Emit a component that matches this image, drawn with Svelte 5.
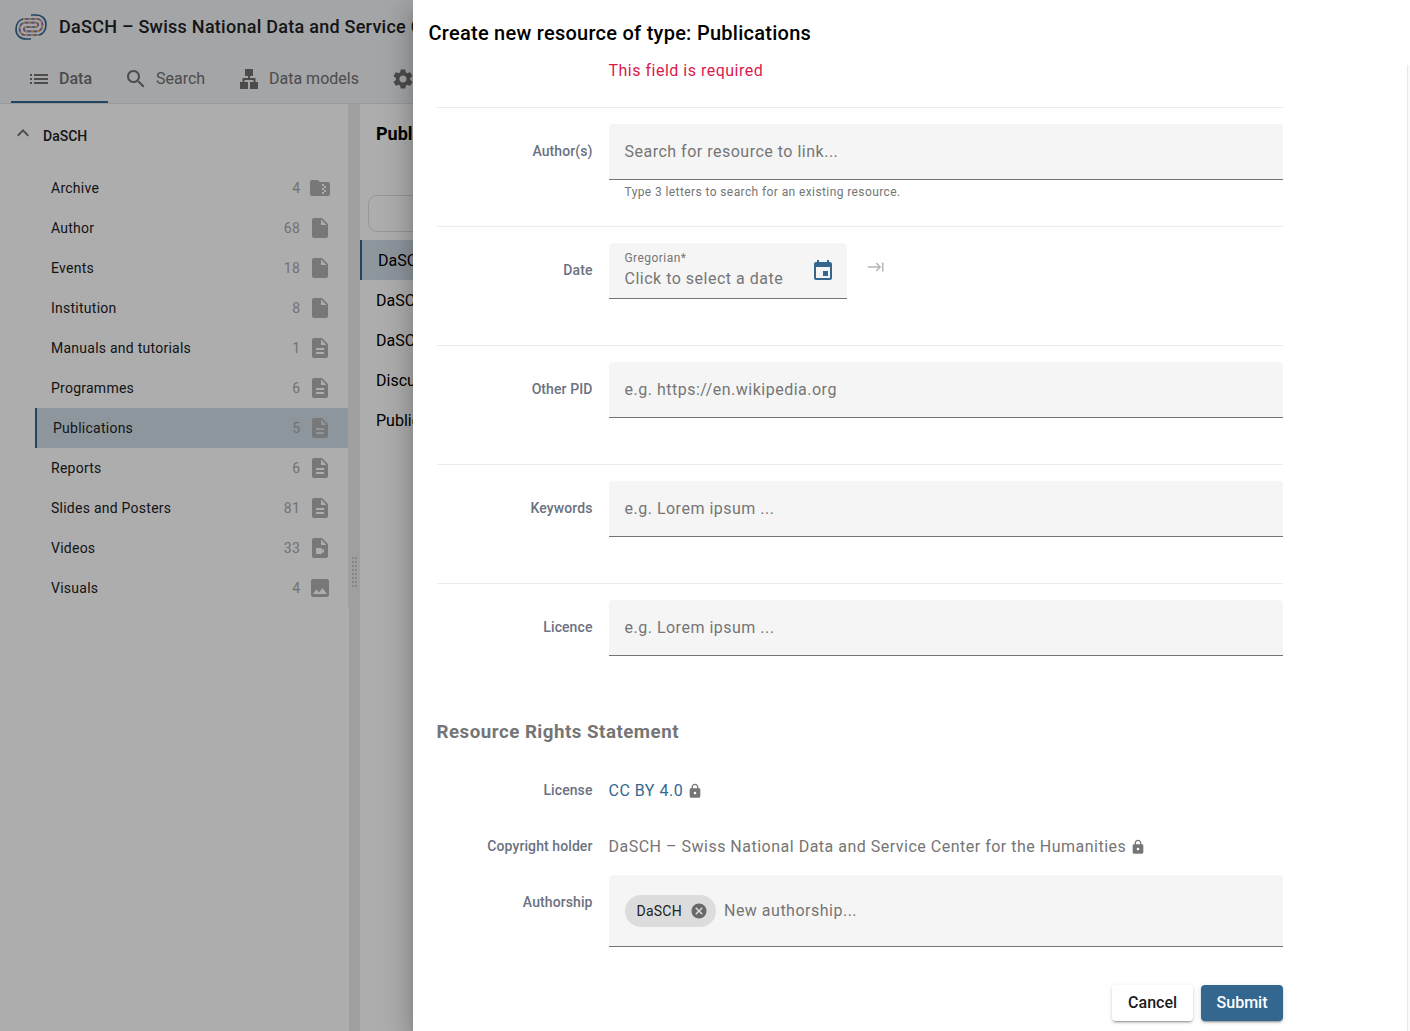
<script>
  const classes = [
    { name: 'Archive', count: 4, icon: 'zip' },
    { name: 'Author', count: 68, icon: 'file' },
    { name: 'Events', count: 18, icon: 'file' },
    { name: 'Institution', count: 8, icon: 'file' },
    { name: 'Manuals and tutorials', count: 1, icon: 'doc' },
    { name: 'Programmes', count: 6, icon: 'doc' },
    { name: 'Publications', count: 5, icon: 'doc', active: true },
    { name: 'Reports', count: 6, icon: 'doc' },
    { name: 'Slides and Posters', count: 81, icon: 'doc' },
    { name: 'Videos', count: 33, icon: 'video' },
    { name: 'Visuals', count: 4, icon: 'image' },
  ];

  const resources = ['DaSCH', 'DaSCH', 'DaSCH', 'Discuss', 'Public'];

  const paths = {
    zip: 'M20 6h-8l-2-2H4c-1.1 0-2 .9-2 2v12c0 1.1.9 2 2 2h16c1.1 0 2-.9 2-2V8c0-1.1-.9-2-2-2zm-2 6h-2v2h2v2h-2v2h-2v-2h2v-2h-2v-2h2v-2h-2V8h2v2h2v2z',
    file: 'M6 2c-1.1 0-2 .9-2 2v16c0 1.1.9 2 2 2h12c1.1 0 2-.9 2-2V8l-6-6H6zm7 7V3.5L18.5 9H13z',
    doc: 'M14 2H6c-1.1 0-2 .9-2 2v16c0 1.1.9 2 2 2h12c1.1 0 2-.9 2-2V8l-6-6zm2 16H8v-2h8v2zm0-4H8v-2h8v2zm-3-5V3.5L18.5 9H13z',
    video: 'M14 2H6c-1.1 0-2 .9-2 2v16c0 1.1.9 2 2 2h12c1.1 0 2-.9 2-2V8l-6-6zm-1 7V3.5L18.5 9H13zm1 5 2-1.06v4.12L14 16v1c0 .55-.45 1-1 1H9c-.55 0-1-.45-1-1v-4c0-.55.45-1 1-1h4c.55 0 1 .45 1 1v1z',
    image: 'M21 19V5c0-1.1-.9-2-2-2H5c-1.1 0-2 .9-2 2v14c0 1.1.9 2 2 2h14c1.1 0 2-.9 2-2zM8.5 13.5l2.5 3.01L14.5 12l4.5 6H5l3.5-4.5z',
    list: 'M3 9h2V7H3v2zm0 4h2v-2H3v2zm0 4h2v-2H3v2zM7 7v2h14V7H7zm0 6h14v-2H7v2zm0 4h14v-2H7v2z',
    search: 'M15.5 14h-.79l-.28-.27C15.41 12.59 16 11.11 16 9.5 16 5.91 13.09 3 9.5 3S3 5.91 3 9.5 5.91 16 9.5 16c1.61 0 3.09-.59 4.23-1.57l.27.28v.79l5 4.99L20.49 19l-4.99-5zm-6 0C7.01 14 5 11.99 5 9.5S7.01 5 9.5 5 14 7.01 14 9.5 11.99 14 9.5 14z',
    tree: 'M8 2h8v7h-3v2h5.5v4H21v7h-8v-7h3.5v-2h-9v2H11v7H3v-7h2.5v-4H11V9H8z',
    gear: 'M19.14 12.94c.04-.3.06-.61.06-.94 0-.32-.02-.64-.07-.94l2.03-1.58c.18-.14.23-.41.12-.61l-1.92-3.32c-.12-.22-.37-.29-.59-.22l-2.39.96c-.5-.38-1.03-.7-1.62-.94l-.36-2.54c-.04-.24-.24-.41-.48-.41h-3.84c-.24 0-.43.17-.47.41l-.36 2.54c-.59.24-1.13.57-1.62.94l-2.39-.96c-.22-.08-.47 0-.59.22L2.74 8.87c-.12.21-.08.47.12.61l2.03 1.58c-.05.3-.09.63-.09.94s.02.64.07.94l-2.03 1.58c-.18.14-.23.41-.12.61l1.92 3.32c.12.22.37.29.59.22l2.39-.96c.5.38 1.03.7 1.62.94l.36 2.54c.05.24.24.41.48.41h3.84c.24 0 .44-.17.47-.41l.36-2.54c.59-.24 1.13-.56 1.62-.94l2.39.96c.22.08.47 0 .59-.22l1.92-3.32c.12-.22.07-.47-.12-.61l-2.01-1.58zM12 15.6c-1.98 0-3.6-1.62-3.6-3.6s1.62-3.6 3.6-3.6 3.6 1.62 3.6 3.6-1.62 3.6-3.6 3.6z',
    up: 'M12 8l-6 6 1.41 1.41L12 10.83l4.59 4.58L18 14z',
    calendar: 'M17 12h-5v5h5v-5zM16 1v2H8V1H6v2H5c-1.11 0-1.99.9-1.99 2L3 19c0 1.1.89 2 2 2h14c1.1 0 2-.9 2-2V5c0-1.1-.9-2-2-2h-1V1h-2zm3 18H5V8h14v11z',
    tab: 'M11.59 7.41 15.17 11H1v2h14.17l-3.59 3.59L13 18l6-6-6-6-1.41 1.41zM20 6v12h2V6h-2z',
    lock: 'M18 8h-1V6c0-2.76-2.24-5-5-5S7 3.24 7 6v2H6c-1.1 0-2 .9-2 2v10c0 1.1.9 2 2 2h12c1.1 0 2-.9 2-2V10c0-1.1-.9-2-2-2zm-6 9c-1.1 0-2-.9-2-2s.9-2 2-2 2 .9 2 2-.9 2-2 2zm3.1-9H8.9V6c0-1.71 1.39-3.1 3.1-3.1s3.1 1.39 3.1 3.1v2z',
    cancel: 'M12 2C6.47 2 2 6.47 2 12s4.47 10 10 10 10-4.47 10-10S17.53 2 12 2zm5 13.59L15.59 17 12 13.41 8.41 17 7 15.59 10.59 12 7 8.41 8.41 7 12 10.59 15.59 7 17 8.41 13.41 12 17 15.59z',
  };

  // One coil of the logo; the second is the same coil turned by 180 degrees.
  const coilOuter = 'M16 1H21C27 1 31 5 31 10.5C31 16 28 20 24 21';
  const coilInner = 'M24 21H10C6.5 21 4.5 18.5 4.5 15C4.5 11.5 7 8.7 10 8.7H20.5C24 8.7 24 13 20.5 13H13';
</script>

{#snippet icon(name, cls)}
  <svg class="icon {cls}" viewBox="0 0 24 24" aria-hidden="true"><path d={paths[name]} /></svg>
{/snippet}

{#snippet coil()}
  <path class="blue" d={coilOuter} />
  <path class="steel" d={coilInner} />
  <path class="dash orange" d={coilInner} />
  <path class="dash pink" d={coilInner} />
{/snippet}

<div class="page">
  <header>
    <div class="brand">
      <svg class="logo" viewBox="0 0 32 26" fill="none">
        <g>{@render coil()}</g>
        <g transform="rotate(180 16 13)">{@render coil()}</g>
      </svg>
      <span class="brand-name">DaSCH – Swiss National Data and Service Center</span>
    </div>
    <nav>
      <span class="tab current">{@render icon('list', '')}Data</span>
      <span class="tab search">{@render icon('search', '')}Search</span>
      <span class="tab">{@render icon('tree', '')}Data models</span>
      <span class="tab">{@render icon('gear', '')}</span>
    </nav>
  </header>

  <div class="body">
    <aside>
      <div class="ontology">{@render icon('up', 'chevron')}<span>DaSCH</span></div>
      <ul class="classes">
        {#each classes as c}
          <li class:active={c.active}>
            <span class="name">{c.name}</span>
            <span class="count">{c.count}</span>
            {@render icon(c.icon, '')}
          </li>
        {/each}
      </ul>
    </aside>
    <div class="splitter"><div class="grip"></div></div>
    <main>
      <h2>Publications</h2>
      <div class="filter"></div>
      <ul class="resources">
        {#each resources as r, i}
          <li class:active={i === 0}>{r}</li>
        {/each}
      </ul>
    </main>
  </div>
</div>

<div class="backdrop"></div>

<section class="drawer">
  <h1>Create new resource of type: Publications</h1>
  <div class="scroller">
    <form>
      <p class="error">This field is required</p>

      <div class="row">
        <span class="label">Author(s)</span>
        <div class="control">
          <div class="field">Search for resource to link...</div>
          <span class="hint">Type 3 letters to search for an existing resource.</span>
        </div>
      </div>
      <div class="row">
        <span class="label">Date</span>
        <div class="control dates">
          <div class="field date">
            <div class="date-text"><small>Gregorian*</small><span>Click to select a date</span></div>
            {@render icon('calendar', 'calendar')}
          </div>
          {@render icon('tab', 'range')}
        </div>
      </div>
      <div class="row">
        <span class="label">Other PID</span>
        <div class="control"><div class="field">e.g. https://en.wikipedia.org</div></div>
      </div>
      <div class="row">
        <span class="label">Keywords</span>
        <div class="control"><div class="field">e.g. Lorem ipsum ...</div></div>
      </div>
      <div class="row">
        <span class="label">Licence</span>
        <div class="control"><div class="field">e.g. Lorem ipsum ...</div></div>
      </div>

      <h3>Resource Rights Statement</h3>
      <div class="right-row">
        <span class="label">License</span>
        <span class="value link">CC BY 4.0{@render icon('lock', 'lock')}</span>
      </div>
      <div class="right-row">
        <span class="label">Copyright holder</span>
        <span class="value">DaSCH – Swiss National Data and Service Center for the Humanities{@render icon('lock', 'lock')}</span>
      </div>
      <div class="right-row authorship">
        <span class="label">Authorship</span>
        <div class="field chips">
          <span class="chip">DaSCH{@render icon('cancel', 'cancel')}</span>
          <span>New authorship...</span>
        </div>
      </div>

      <div class="actions">
        <button type="button">Cancel</button>
        <button type="button" class="primary">Submit</button>
      </div>
    </form>
  </div>
</section>

<style>
  :global(body) {
    margin: 0;
    overflow: hidden;
    font-family: Roboto, 'Liberation Sans', sans-serif;
    background: #fff;
  }
  * { box-sizing: border-box; }
  ul { list-style: none; margin: 0; padding: 0; }
  h1, h2, h3, p { margin: 0; }
  .icon { width: 24px; height: 24px; fill: currentColor; flex: none; }

  .page {
    height: 1031px;
    display: flex;
    flex-direction: column;
    overflow: hidden;
  }
  header {
    height: 104px;
    background: #f1f3f6;
    border-bottom: 1px solid #e4e4e4;
    flex: none;
  }
  .brand {
    height: 54px;
    padding-left: 15px;
    display: flex;
    align-items: center;
    gap: 12px;
    white-space: nowrap;
  }
  .logo { width: 32px; height: 26px; flex: none; stroke-width: 1.7; }
  .blue { stroke: #336790; }
  .steel { stroke: #5d8db5; }
  .dash { stroke-dasharray: 2 4; }
  .orange { stroke: #f2b450; }
  .pink { stroke: #c0609a; stroke-dashoffset: 3px; }
  .brand-name {
    padding-bottom: 2px;
    font-size: 18px;
    font-weight: 500;
    letter-spacing: 0.26px;
    color: #202124;
  }
  nav { height: 49px; padding-left: 11px; display: flex; color: #707070; }
  .tab {
    display: flex;
    align-items: center;
    gap: 8px;
    height: 49px;
    padding: 0 16px;
    font-size: 16px;
    white-space: nowrap;
  }
  .current {
    width: 97px;
    font-weight: 500;
    box-shadow: inset 0 -2px #336790;
  }
  .search { width: 113px; }

  .body { flex: 1; display: flex; min-height: 0; }
  aside { width: 348px; flex: none; }
  .ontology {
    height: 64px;
    padding-left: 11px;
    display: flex;
    align-items: center;
    gap: 8px;
    font-size: 14px;
    font-weight: 500;
    color: #202124;
  }
  .chevron { color: #707070; margin-bottom: 6px; }
  .classes { padding-left: 35px; }
  .classes li {
    height: 40px;
    padding: 0 16px;
    display: flex;
    align-items: center;
    font-size: 14px;
    letter-spacing: 0.25px;
    color: #202124;
  }
  .classes .name { flex: 1; }
  .classes .count { margin-right: 7.5px; color: #a8a8a8; letter-spacing: 0.5px; }
  .classes .icon { color: #b2b2b2; }
  li.active { background: #d2dee8; border-left: 2px solid #336790; }
  .splitter {
    width: 12px;
    flex: none;
    background: linear-gradient(#fff, #fff) 0 504px / 1px 100% no-repeat #eaeaea;
    display: flex;
    justify-content: flex-end;
    align-items: center;
    padding: 9px 2px 0 0;
  }
  .grip {
    width: 6px;
    height: 31px;
    background:
      linear-gradient(transparent 2px, #eaeaea 2px) 0 0 / 100% 4px,
      repeating-linear-gradient(90deg, #c4c4c4 0 2px, transparent 2px 3px);
  }
  main { flex: 1; }
  main h2 { font-size: 18px; font-weight: 700; padding: 19px 16px 0; line-height: 21px; }
  .filter {
    height: 37px;
    margin: 51px 8px 8px;
    border: 1px solid #dedede;
    border-radius: 9px;
  }
  .resources li { height: 40px; padding-left: 16px; line-height: 42px; font-size: 16px; }

  .backdrop { position: absolute; inset: 0; background: rgba(0, 0, 0, 0.32); }

  .drawer {
    position: absolute;
    top: 0;
    right: 0;
    width: 997px;
    height: 1031px;
    background: #fff;
    display: flex;
    flex-direction: column;
    box-shadow:
      0 8px 10px -5px rgba(0, 0, 0, 0.2),
      0 16px 24px 2px rgba(0, 0, 0, 0.14),
      0 6px 30px 5px rgba(0, 0, 0, 0.12);
  }
  h1 {
    height: 65px;
    padding-left: 15.5px;
    line-height: 66px;
    font-size: 20px;
    font-weight: 500;
    letter-spacing: 0.26px;
    color: #000;
    flex: none;
  }
  .scroller {
    flex: 1;
    min-height: 0;
    padding: 0 124px 0 23.5px;
    border-right: 2px solid #fafafa;
    box-shadow: inset -1px 0 #e8e8e8;
  }
  form { width: 846.5px; }
  .error {
    height: 42px;
    padding-left: 172px;
    line-height: 12px;
    font-size: 16px;
    letter-spacing: 0.5px;
    color: #d81b4c;
  }
  .row {
    height: 119px;
    padding-top: 16px;
    border-top: 1px solid #ebebeb;
    display: flex;
    gap: 16px;
  }
  .label {
    width: 156px;
    flex: none;
    text-align: right;
    font-size: 14px;
    font-weight: 500;
    line-height: 20px;
    letter-spacing: 0.09px;
    color: #6b7280;
  }
  .row .label { padding-top: 17px; }
  .control { flex: 1; display: flex; flex-direction: column; }
  .field {
    height: 56px;
    padding: 0 16px;
    display: flex;
    align-items: center;
    background: #f5f5f5;
    border-bottom: 1px solid #747474;
    border-radius: 4px 4px 0 0;
    font-size: 16px;
    letter-spacing: 0.5px;
    color: #757575;
  }
  .hint {
    padding: 5px 16px;
    font-size: 12px;
    line-height: 14px;
    letter-spacing: 0.4px;
    color: #757575;
  }
  .control.dates { flex-direction: row; gap: 20.5px; }
  .date { width: 238px; justify-content: space-between; padding-right: 12px; }
  .date-text { display: flex; flex-direction: column; white-space: nowrap; }
  .date small { font-size: 12px; line-height: 16px; letter-spacing: 0.45px; padding-bottom: 1px; }
  .date span { line-height: 24px; }
  .calendar { color: #336790; }
  .range { width: 18px; height: 18px; margin-top: 15px; color: #b5b5b5; }

  h3 {
    padding: 16px 0 0;
    line-height: 28px;
    font-size: 18.72px;
    font-weight: 700;
    letter-spacing: 0.5px;
    color: #757575;
    margin-bottom: 16px;
  }
  .right-row { height: 56px; display: flex; gap: 16px; align-items: center; }
  .value {
    display: flex;
    align-items: center;
    font-size: 16px;
    letter-spacing: 0.5px;
    color: #757575;
  }
  .link { color: #336790; }
  .lock { width: 16px; height: 16px; margin: 1px 0 0 4px; color: #757575; }
  .authorship { height: 73px; align-items: flex-start; }
  .authorship .label { padding-top: 18px; }
  .chips { flex: 1; height: 72px; gap: 8px; margin-top: 1px; }
  .chip {
    height: 32px;
    padding: 0 8px 0 12px;
    display: flex;
    align-items: center;
    gap: 8px;
    border-radius: 16px;
    background: #dcdcdc;
    font-size: 14px;
    letter-spacing: 0.25px;
    color: #212121;
  }
  .cancel { width: 18px; height: 18px; color: #686868; }

  .actions { display: flex; justify-content: flex-end; gap: 8px; margin-top: 38px; }
  button {
    height: 36px;
    padding: 0 16px 2px;
    border: 0;
    border-radius: 4px;
    background: #fff;
    color: #1b1b1f;
    font: 500 16px Roboto, sans-serif;
    box-shadow:
      0 3px 1px -2px rgba(0, 0, 0, 0.2),
      0 2px 2px rgba(0, 0, 0, 0.14),
      0 1px 5px rgba(0, 0, 0, 0.12);
  }
  .primary { padding: 0 15.5px 2px; background: #336790; color: #fff; }
</style>
